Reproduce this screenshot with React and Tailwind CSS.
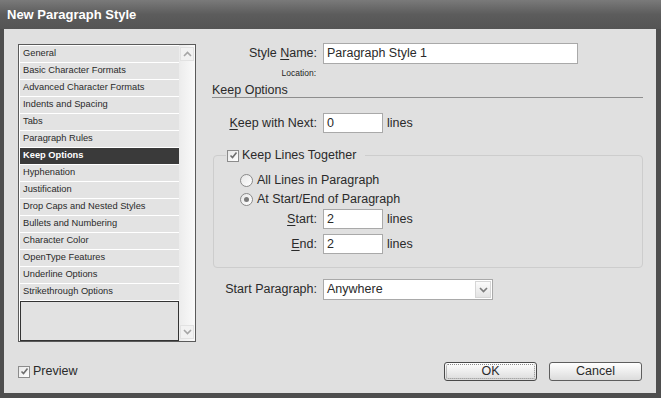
import React from "react";

const styles = [
  "General",
  "Basic Character Formats",
  "Advanced Character Formats",
  "Indents and Spacing",
  "Tabs",
  "Paragraph Rules",
  "Keep Options",
  "Hyphenation",
  "Justification",
  "Drop Caps and Nested Styles",
  "Bullets and Numbering",
  "Character Color",
  "OpenType Features",
  "Underline Options",
  "Strikethrough Options",
];

function Check() {
  return (
    <div className="w-[12px] h-[12px] border border-[#8c8c8c] bg-gradient-to-br from-[#e8e8e8] to-white flex items-center justify-center shrink-0">
      <svg width="9" height="9" viewBox="0 0 9 9">
        <path d="M1.5 4.5 L3.5 6.5 L7.5 1.5" stroke="#6f6f6f" strokeWidth="1.6" fill="none" />
      </svg>
    </div>
  );
}

function Radio({ on }) {
  return (
    <div className="w-[13px] h-[13px] rounded-full border border-[#8a8a8a] bg-gradient-to-br from-[#e6e6e6] to-white flex items-center justify-center shrink-0">
      {on && <div className="w-[5px] h-[5px] rounded-full bg-[#7a7a7a]" />}
    </div>
  );
}

function Field({ value, w = "w-[60px]" }) {
  return (
    <div className={`${w} h-[20px] bg-white border border-[#a9a9a9] flex items-center px-[3px] text-[12.5px]`}>
      {value}
    </div>
  );
}

function Chevron({ up }) {
  return (
    <svg width="9" height="6" viewBox="0 0 9 6">
      <path d={up ? "M1 5 L4.5 1.5 L8 5" : "M1 1 L4.5 4.5 L8 1"} stroke="#a6a6a6" strokeWidth="1.6" fill="none" />
    </svg>
  );
}

export default function App() {
  return (
    <div
      className="w-[661px] h-[398px] bg-[#4e4e4e] flex flex-col text-[#2a2a2a]"
      style={{ fontFamily: '"Liberation Sans", Arial, sans-serif' }}
    >
      {/* title bar */}
      <div className="h-[29px] shrink-0 flex items-center pl-[7px] bg-gradient-to-b from-[#7a7a7a] via-[#5c5c5c] to-[#545454] text-white font-bold text-[13px]">
        New Paragraph Style
      </div>

      <div className="flex-1 ml-[4px] mr-[5px] mb-[5px] bg-[#e0e0e0] flex flex-col">
        <div className="flex pt-[15px]">
          {/* style list */}
          <div className="ml-[14px] w-[178px] h-[298px] border border-[#5a5a5a] flex bg-white">
            <div className="flex-1 flex flex-col pt-[1px] pl-[1px]">
              {styles.map((s) => (
                <div
                  key={s}
                  className={`h-[17px] border-b border-white flex items-center pl-[3px] text-[9.3px] ${
                    s === "Keep Options" ? "bg-[#3a3a3a] text-white font-bold" : "bg-[#e3e3e3]"
                  }`}
                >
                  {s}
                </div>
              ))}
              <div className="flex-1 border border-[#333] bg-[#e2e2e2]" />
            </div>
            <div className="w-[16px] bg-gradient-to-r from-[#ececec] to-[#fafafa] flex flex-col justify-between py-[2px]">
              <div className="h-[14px] mx-[1px] border border-[#e2e2e2] bg-[#f2f2f2] flex items-center justify-center">
                <Chevron up />
              </div>
              <div className="h-[14px] mx-[1px] border border-[#e2e2e2] bg-[#f2f2f2] flex items-center justify-center">
                <Chevron />
              </div>
            </div>
          </div>

          {/* options panel */}
          <div className="ml-[16px] w-[431px] -mt-[1px] flex flex-col text-[12.5px]">
            <div className="h-[21px] flex items-center">
              <div className="w-[105px] text-right">
                Style <u className="underline-offset-2">N</u>ame:
              </div>
              <div className="ml-[6px] w-[255px] h-[21px] bg-white border border-[#a9a9a9] flex items-center px-[3px]">
                Paragraph Style 1
              </div>
            </div>
            <div className="h-[19px] flex items-center">
              <div className="w-[104px] text-right text-[8.5px] text-[#1e1e1e]">Location:</div>
            </div>
            <div className="h-[15px] border-b border-[#8e8e8e] leading-[14px]">Keep Options</div>

            <div className="mt-[15px] h-[20px] flex items-center">
              <div className="w-[105px] text-right">
                <u className="underline-offset-2">K</u>eep with Next:
              </div>
              <div className="ml-[6px]">
                <Field value="0" />
              </div>
              <span className="ml-[4px]">lines</span>
            </div>

            <div className="mt-[22px] ml-[1px] border border-[#cdcdcd] rounded-[4px] flex flex-col pb-[13px]">
              <div className="-mt-[7px] h-[13px] ml-[12px] pl-[1px] pr-[9px] w-fit bg-[#e0e0e0] flex items-center gap-[3px]">
                <Check />
                <span>Keep Lines Together</span>
              </div>
              <div className="mt-[8px] h-[20px] flex items-center pl-[26px] gap-[4px]">
                <Radio />
                <span>All Lines in Paragraph</span>
              </div>
              <div className="h-[19px] flex items-center pl-[26px] gap-[4px]">
                <Radio on />
                <span>At Start/End of Paragraph</span>
              </div>
              <div className="h-[20px] flex items-center">
                <div className="w-[103px] text-right">
                  <u className="underline-offset-2">S</u>tart:
                </div>
                <div className="ml-[6px]">
                  <Field value="2" />
                </div>
                <span className="ml-[4px]">lines</span>
              </div>
              <div className="mt-[5px] h-[20px] flex items-center">
                <div className="w-[103px] text-right">
                  <u className="underline-offset-2">E</u>nd:
                </div>
                <div className="ml-[6px]">
                  <Field value="2" />
                </div>
                <span className="ml-[4px]">lines</span>
              </div>
            </div>

            <div className="mt-[11px] h-[21px] flex items-center">
              <div className="w-[105px] text-right">Start Paragraph:</div>
              <div className="ml-[6px] w-[170px] h-[21px] bg-white border border-[#a9a9a9] flex items-center pl-[3px] pr-[1px]">
                <span className="flex-1">Anywhere</span>
                <div className="w-[16px] h-[17px] border border-[#d6d6d6] bg-gradient-to-b from-[#fbfbfb] to-[#e4e4e4] flex items-center justify-center">
                  <svg width="9" height="6" viewBox="0 0 9 6">
                    <path d="M1 1 L4.5 4.5 L8 1" stroke="#7c7c7c" strokeWidth="1.7" fill="none" />
                  </svg>
                </div>
              </div>
            </div>
          </div>
        </div>

        {/* footer */}
        <div className="mt-[20px] h-[19px] flex items-center pl-[14px] pr-[14px] text-[12.5px]">
          <Check />
          <span className="ml-[3px]">Preview</span>
          <div className="ml-auto w-[93px] h-[19px] rounded-[3px] border border-[#4a4a4a] bg-gradient-to-b from-white to-[#dcdcdc] flex items-center justify-center p-[1px]">
            <div className="w-full h-full border border-dotted border-[#8a8a8a] rounded-[2px] flex items-center justify-center">
              OK
            </div>
          </div>
          <div className="ml-[12px] w-[93px] h-[19px] rounded-[3px] border border-[#5e5e5e] bg-gradient-to-b from-white to-[#dcdcdc] flex items-center justify-center">
            Cancel
          </div>
        </div>
      </div>
    </div>
  );
}
